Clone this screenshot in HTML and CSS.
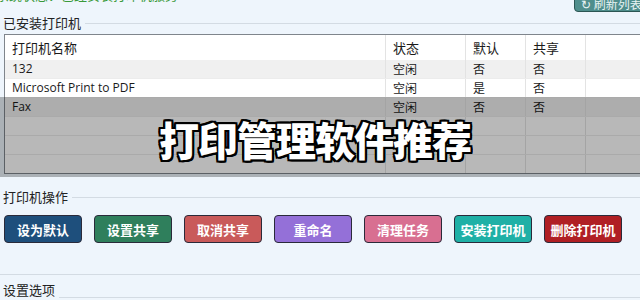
FILE: index.html
```html
<!DOCTYPE html>
<html lang="zh-CN">
<head>
<meta charset="utf-8">
<link rel="stylesheet" href="styles.css">
</head>
<body>
<div class="page">
  <div class="topbar">
    <span class="status">系统状态：已经安装打印机服务</span>
    <button class="refresh">↻ 刷新列表</button>
  </div>

  <div class="legend"><span>已安装打印机</span><i class="rule"></i></div>

  <div class="table">
    <div class="row head">
      <div class="c">打印机名称</div><div class="c">状态</div><div class="c">默认</div><div class="c">共享</div><div class="c"></div>
    </div>
    <div class="row alt">
      <div class="c">132</div><div class="c">空闲</div><div class="c">否</div><div class="c">否</div><div class="c"></div>
    </div>
    <div class="row">
      <div class="c">Microsoft Print to PDF</div><div class="c">空闲</div><div class="c">是</div><div class="c">否</div><div class="c"></div>
    </div>
    <div class="row alt">
      <div class="c">Fax</div><div class="c">空闲</div><div class="c">否</div><div class="c">否</div><div class="c"></div>
    </div>
    <div class="row"><div class="c"></div><div class="c"></div><div class="c"></div><div class="c"></div><div class="c"></div></div>
    <div class="row"><div class="c"></div><div class="c"></div><div class="c"></div><div class="c"></div><div class="c"></div></div>
    <div class="row last"><div class="c"></div><div class="c"></div><div class="c"></div><div class="c"></div><div class="c"></div></div>
  </div>

  <div class="legend ops-legend"><span>打印机操作</span><i class="rule"></i></div>
  <div class="buttons">
    <button class="btn b1">设为默认</button>
    <button class="btn b2">设置共享</button>
    <button class="btn b3">取消共享</button>
    <button class="btn b4">重命名</button>
    <button class="btn b5">清理任务</button>
    <button class="btn b6">安装打印机</button>
    <button class="btn b7">删除打印机</button>
  </div>
  <div class="sep"></div>
  <div class="legend set-legend"><span>设置选项</span><i class="rule"></i></div>

  <div class="overlay"><span class="title">打印管理软件推荐</span></div>
</div>
</body>
</html>
```
FILE: styles.css
```css
html, body {
  margin: 0;
  padding: 0;
  background: #eef5fc;
}
body {
  font-family: "Noto Sans CJK SC", "Noto Sans", sans-serif;
  font-size: 13px;
  color: #1a1a1a;
  width: 640px;
  height: 300px;
  overflow: hidden;
}
.page {
  position: relative;
  width: 640px;
  height: 300px;
  overflow: hidden;
}
.topbar {
  display: flex;
  justify-content: space-between;
  align-items: flex-start;
  height: 12px;
}
.status {
  color: #3a9a3a;
  font-size: 13px;
  line-height: 14px;
  margin-top: -12px;
  margin-left: -4px;
}
.refresh {
  margin-top: -5px;
  margin-right: -12px;
  height: 17px;
  width: 78px;
  padding: 0 0 0 6px;
  text-align: left;
  background: #4f8e8c;
  color: #e8f4f4;
  border: 1px solid #2c5654;
  border-radius: 4px;
  font-family: "Noto Sans CJK SC", sans-serif;
  font-size: 12px;
  line-height: 14px;
}
.legend {
  display: flex;
  align-items: center;
  height: 20px;
  margin-top: 1px;
}
.legend span {
  padding-left: 3px;
  padding-right: 4px;
  font-size: 13px;
  line-height: 18px;
  color: #222;
}
.legend .rule {
  flex: 1;
  height: 1px;
  background: #d3dbe3;
}
.table {
  margin-top: 1px;
  margin-left: 4px;
  border: 1px solid #7f858c;
  border-right: none;
  background: #fff;
  width: 650px;
}
.row {
  display: grid;
  grid-template-columns: 381px 80px 60px 60px 1fr;
  height: 19px;
  border-bottom: 1px solid #ececec;
  box-sizing: border-box;
}
.row.head {
  height: 25px;
  border-bottom: none;
}
.row.last { border-bottom: none; height: 18px; }
.row.alt { background: #f0f0f0; }
.c {
  border-right: 1px solid #e3e3e3;
  padding-left: 7px;
  font-size: 12px;
  line-height: 18px;
  white-space: nowrap;
}
.c:first-child {
  font-family: "Open Sans", "Noto Sans CJK SC", sans-serif;
}
.head .c {
  font-size: 13px;
  line-height: 25px;
  font-family: "Noto Sans CJK SC", sans-serif;
}
.ops-legend {
  margin-top: 13px;
}
.buttons {
  display: flex;
  gap: 12px;
  padding-left: 4px;
  margin-top: 8px;
}
.btn {
  width: 78px;
  height: 28px;
  border: 1px solid #2a2a3a;
  border-radius: 4px;
  color: #fff;
  font-family: "Noto Sans CJK SC", sans-serif;
  font-weight: 700;
  font-size: 13px;
  padding: 0;
}
.b1 { background: #1e4f7c; }
.b2 { background: #2f7f5c; }
.b3 { background: #c95a5a; }
.b4 { background: #9470d8; }
.b5 { background: #d86f91; }
.b6 { background: #1fb0a6; }
.b7 { background: #b01f24; }
.sep {
  margin-top: 31px;
  height: 1px;
  background: #d3dbe3;
}
.set-legend {
  margin-top: 0;
  height: 24px;
  align-items: flex-end;
}
.set-legend span {
  line-height: 18px;
  margin-bottom: 0;
}
.set-legend .rule {
  margin-bottom: 1px;
}
.overlay {
  position: absolute;
  left: 0;
  top: 97px;
  width: 640px;
  height: 80px;
  background: rgba(0, 0, 0, 0.28);
  display: flex;
  align-items: center;
  justify-content: center;
}
.title {
  margin-left: -10px;
  margin-top: 4px;
  color: #fff;
  font-family: "Noto Sans CJK SC", sans-serif;
  font-weight: 900;
  font-size: 40px;
  line-height: 44px;
  letter-spacing: -1px;
  text-shadow:
    2px 0 0 #000, -2px 0 0 #000, 0 2px 0 #000, 0 -2px 0 #000,
    2px 2px 0 #000, -2px -2px 0 #000, 2px -2px 0 #000, -2px 2px 0 #000,
    1px 2px 0 #000, 2px 1px 0 #000, -1px -2px 0 #000, -2px -1px 0 #000;
}
```
